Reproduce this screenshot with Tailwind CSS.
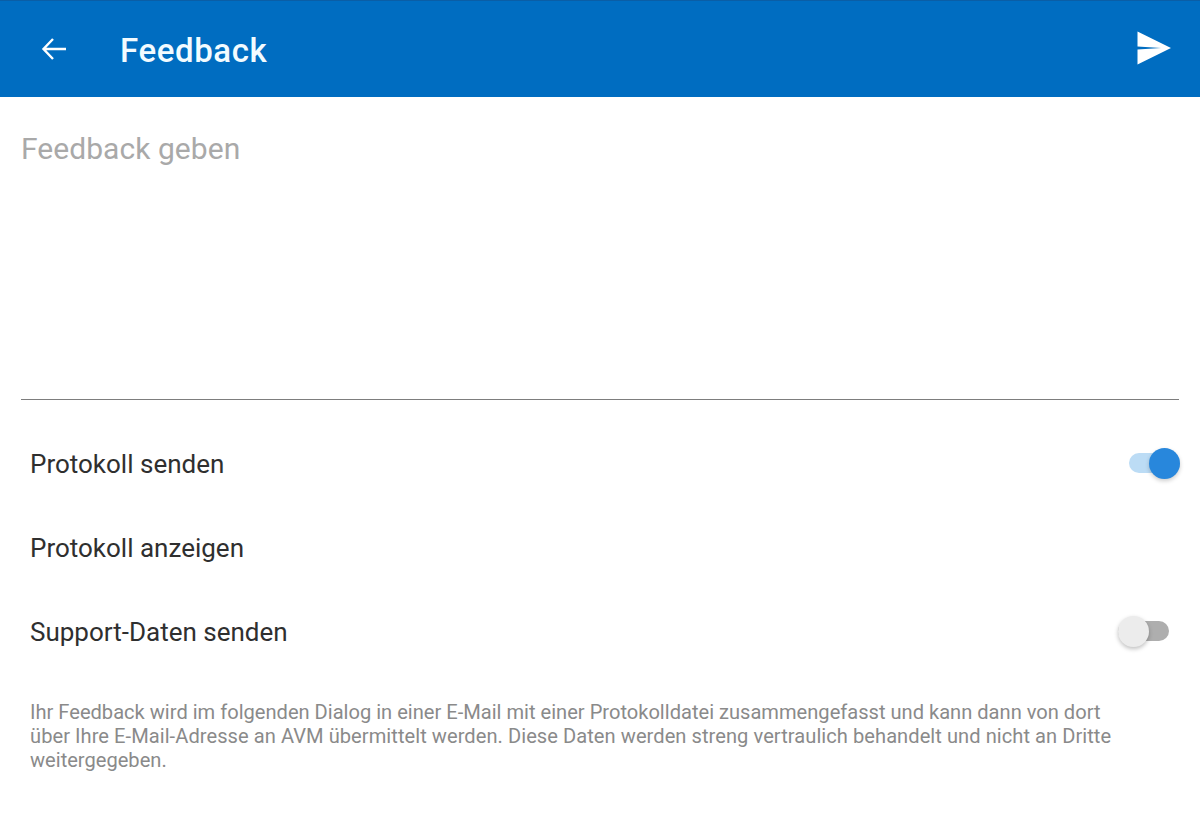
<!DOCTYPE html>
<html>
<head>
<meta charset="utf-8">
<script src="https://cdn.jsdelivr.net/npm/@tailwindcss/browser@4"></script>
</head>
<body class="bg-white font-['Roboto',sans-serif]">
<div class="w-[1200px] h-[839px] overflow-hidden flex flex-col">
  <header class="h-[97px] shrink-0 bg-[#006dc1] border-t border-[#0a5ea6] flex items-center justify-between pl-[40px] pr-[29px] pb-[2px]">
    <div class="flex items-center">
      <svg class="w-[28px] h-[28px] mt-[1px]" viewBox="0 0 28 28" fill="none" stroke="#fff" stroke-width="2.4"><path d="M26 14H3.5M13 4 3.5 14 13 24"/></svg>
      <h1 class="ml-[52px] mt-[6px] text-[33px] leading-[40px] font-medium tracking-[0.6px] text-[#f2fbff]">Feedback</h1>
    </div>
    <svg class="w-[34px] h-[34px]" viewBox="0 0 34 34"><path d="M0.500 0.500 34 17 0.500 33.500V18.500L24 17 0.500 15.500Z" fill="#fff"/></svg>
  </header>
  <main class="flex-1 flex flex-col">
    <div class="h-[303px] mx-[21px] border-b border-[#7d7d7d] pt-[33px] shrink-0">
      <div class="text-[30px] leading-[38px] tracking-[0.05px] text-[#a9a9a9]">Feedback geben</div>
    </div>
    <div class="flex flex-col pt-[22px] pl-[30px] pr-[20px] text-[26px] text-[#2f2f2f]">
      <div class="h-[84px] flex items-center justify-between">
        <span>Protokoll senden</span>
        <div class="relative w-[51px] h-[20px] -mt-[2px]">
          <div class="absolute inset-0 rounded-full bg-[#bcdcf5]"></div>
          <div class="absolute right-0 top-[-5px] w-[31px] h-[31px] rounded-full bg-[#2887dc] shadow-[0_2px_4px_rgba(0,0,0,0.2)]"></div>
        </div>
      </div>
      <div class="h-[84px] flex items-center"><span>Protokoll anzeigen</span></div>
      <div class="h-[84px] flex items-center justify-between">
        <span>Support-Daten senden</span>
        <div class="relative w-[51px] h-[20px] mr-[11px] -mt-[2px]">
          <div class="absolute inset-0 rounded-full bg-[#aeaeae]"></div>
          <div class="absolute left-0 top-[-5px] w-[31px] h-[31px] rounded-full bg-[#ececec] shadow-[0_2px_4px_rgba(0,0,0,0.25)]"></div>
        </div>
      </div>
    </div>
    <p class="ml-[30px] mt-[26px] whitespace-nowrap text-[20.100px] leading-[24px] text-[#8a8a8a]">Ihr Feedback wird im folgenden Dialog in einer E-Mail mit einer Protokolldatei zusammengefasst und kann dann von dort<br><span class="tracking-[0.05px]">über Ihre E-Mail-Adresse an AVM übermittelt werden. Diese Daten werden streng vertraulich behandelt und nicht an Dritte</span><br>weitergegeben.</p>
  </main>
</div>
</body>
</html>
